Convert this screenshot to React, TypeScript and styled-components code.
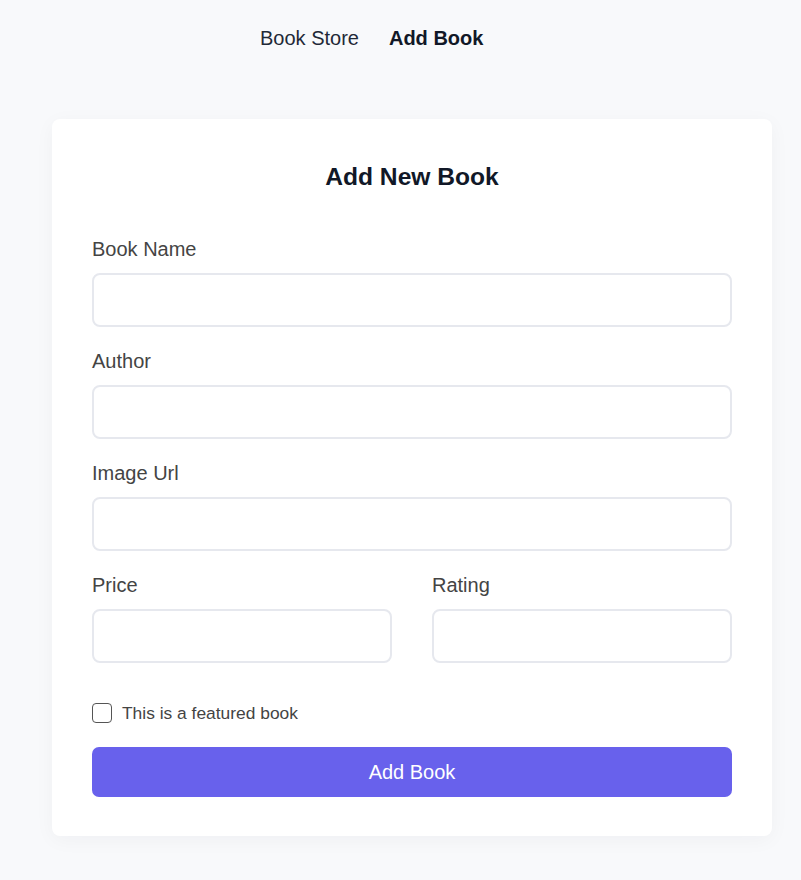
import React from "react";
import styled, { createGlobalStyle } from "styled-components";

const Global = createGlobalStyle`
  html, body { margin: 0; padding: 0; background: #f8f9fb; }
  body { font-family: "Liberation Sans", Arial, sans-serif; }
  * { box-sizing: border-box; }
`;

const Page = styled.div`
  min-height: 880px;
  background: #f8f9fb;
`;

const Nav = styled.nav`
  display: flex;
  align-items: center;
  gap: 30px;
  padding: 26px 0 0 260px;
  height: 50px;
`;

const NavLink = styled.a<{ $active?: boolean }>`
  font-size: 20px;
  line-height: 24px;
  color: ${(p) => (p.$active ? "#111827" : "#1f2937")};
  font-weight: ${(p) => (p.$active ? 700 : 400)};
  text-decoration: none;
`;

const Card = styled.div`
  margin: 69px 0 0 52px;
  width: 720px;
  background: #ffffff;
  border-radius: 8px;
  padding: 40px 40px 39px;
  box-shadow: 0 4px 20px rgba(15, 23, 42, 0.04);
`;

const Title = styled.h2`
  margin: 0 0 42px;
  text-align: center;
  font-size: 24.6px;
  line-height: 36px;
  font-weight: 700;
  color: #111827;
`;

const Form = styled.form`
  display: flex;
  flex-direction: column;
  gap: 22px;
`;

const Field = styled.div`
  display: flex;
  flex-direction: column;
  gap: 12px;
  min-width: 0;
`;

const Label = styled.label`
  font-size: 20px;
  line-height: 24px;
  color: #444444;
`;

const Input = styled.input`
  width: 100%;
  height: 54px;
  border: 2px solid #e6e8ee;
  border-radius: 8px;
  padding: 0 14px;
  font-size: 18px;
  font-family: inherit;
  background: #fff;
  outline: none;
`;

const Row = styled.div`
  display: grid;
  grid-template-columns: 1fr 1fr;
  gap: 40px;
`;

const CheckRow = styled.label`
  display: flex;
  align-items: center;
  gap: 10px;
  height: 24px;
  margin-top: 16px;
  font-size: 17.4px;
  color: #444444;
`;

const Box = styled.span`
  width: 20px;
  height: 20px;
  border: 1.5px solid #555;
  border-radius: 4px;
  background: #fff;
`;

const Button = styled.button`
  height: 50px;
  width: 100%;
  border: none;
  border-radius: 7px;
  background: #6861ec;
  color: #ffffff;
  font-size: 20px;
  font-family: inherit;
  cursor: pointer;
`;

export default function App() {
  return (
    <Page>
      <Global />
      <Nav>
        <NavLink href="#">Book Store</NavLink>
        <NavLink href="#" $active>
          Add Book
        </NavLink>
      </Nav>
      <Card>
        <Title>Add New Book</Title>
        <Form onSubmit={(e) => e.preventDefault()}>
          <Field>
            <Label>Book Name</Label>
            <Input />
          </Field>
          <Field>
            <Label>Author</Label>
            <Input />
          </Field>
          <Field>
            <Label>Image Url</Label>
            <Input />
          </Field>
          <Row>
            <Field>
              <Label>Price</Label>
              <Input />
            </Field>
            <Field>
              <Label>Rating</Label>
              <Input />
            </Field>
          </Row>
          <CheckRow>
            <Box />
            This is a featured book
          </CheckRow>
          <Button type="submit">Add Book</Button>
        </Form>
      </Card>
    </Page>
  );
}
